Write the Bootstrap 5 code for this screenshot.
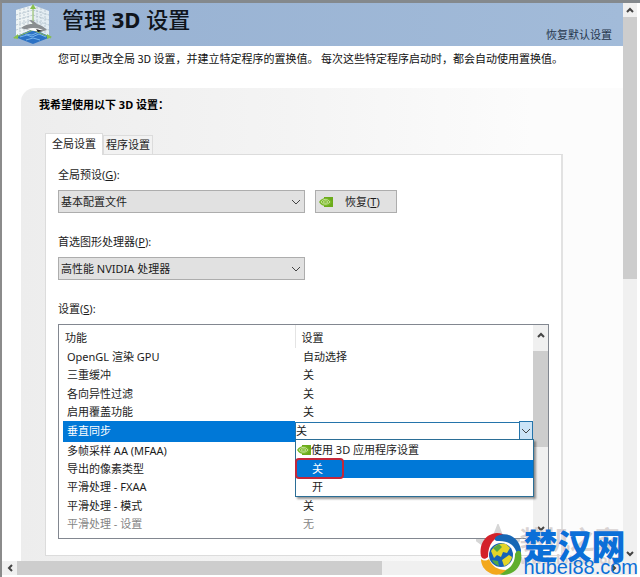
<!DOCTYPE html>
<html lang="zh-CN">
<head>
<meta charset="utf-8">
<meta name="viewport" content="width=device-width, initial-scale=1">
<title>管理 3D 设置</title>
<link href="https://cdn.jsdelivr.net/npm/bootstrap@5.3.0/dist/css/bootstrap.min.css" rel="stylesheet">
<style>
body { font-family: "Noto Sans", "Noto Sans CJK SC", sans-serif; font-size: 11px; line-height: 16px; color: #1c1c1c; background: #fff; }
.window { border-top: 3px solid #84898d; border-left: 2px solid #8b8b8b; padding-right: 3px; padding-bottom: 2px; }
.titlebar { background: linear-gradient(90deg, #97b1d2, #a2bbd9); height: 43px; padding: 0 11px 0 10px; }
.titlebar h1 { font-size: 22px; line-height: 32px; font-weight: 500; color: #10151c; margin: 0 0 0 8px; }
.titlebar a { color: #26364c; margin-bottom: 3px; }
.intro { font-family: "Noto Sans CJK SC", sans-serif; padding: 4px 0 22px 56px; color: #111; }
.sheet { margin-left: 19px; padding: 9px 60px 5px 24px; border-radius: 14px 0 0 0; background: linear-gradient(90deg, #ededed, #f4f4f4 45%, #fcfcfc 85%); }
.sheet h2 { font-size: 11px; line-height: 16px; font-weight: 700; margin: 0 0 20px -6px; color: #000; }
.tabs button { border: 1px solid #dcdcdc; border-bottom: 0; background: #f2f2f2; padding: 0 2px; height: 19px; color: #1c1c1c; }
.tabs button.active { background: #fff; height: 22px; padding: 0 6px 2px; margin-bottom: -1px; position: relative; }
.pane { background: #fff; border: 1px solid #dcdcdc; border-right: 2px solid #e2e2e2; padding: 12px 12px 16px 12px; }
.field-label { display: block; margin-bottom: 7px; }
.field { margin-bottom: 21px; }
.combo { width: 247px; height: 23px; border: 1px solid #adadad; border-radius: 0; background-color: #e1e1e1; padding: 0 22px 0 2px; font-size: 11px; line-height: 16px; color: #1c1c1c; background-position: right 3px center; background-size: 10px 8px; }
.chev { background-image: url("data:image/svg+xml,%3Csvg xmlns='http://www.w3.org/2000/svg' viewBox='0 0 10 8'%3E%3Cpath d='M1 2l4 4 4-4' fill='none' stroke='%23444'/%3E%3C/svg%3E"); background-repeat: no-repeat; appearance: none; }
.restore { width: 82px; height: 23px; border: 1px solid #adadad; background: #e1e1e1; padding: 0 3px; margin-left: 10px; color: #1c1c1c; }
.listbox { border: 1px solid #828790; height: 215px; padding-left: 4px; }
.listbox table { height: 208px; table-layout: fixed; border-collapse: collapse; }
.listbox th { font-weight: 400; height: 23px; padding: 2px 0 0 2px; }
.listbox th + th { border-left: 1px solid #e4e4e4; padding-left: 6px; }
.listbox th:first-child { width: 232px; }
.listbox td { padding: 0 0 0 4px; line-height: 16px; }
.listbox td + td { padding-left: 8px; }
.listbox tr.picked td { background: #0078d7; color: #fff; }
.listbox tr.picked td + td { padding: 0; position: relative; background: #fff; }
.cellcombo { width: 100%; height: 18px; border: 1px solid #2474ab; border-radius: 0; padding: 0; font-size: 11px; line-height: 16px; display: block; color: #1c1c1c; background: #fff; }
.cellcombo-arrow { right: 0; top: 0; bottom: 0; width: 14px; background-color: #cce4f7; border: 1px solid #2474ab; pointer-events: none; background-position: center; background-size: 10px 8px; }
.drop { left: 0; right: -1px; top: 18px; border: 1px solid #2b6e96; background: #fff; box-shadow: 2px 2px 2px #0006; z-index: 3; color: #1c1c1c; }
.drop li { height: 18px; line-height: 18px; padding-left: 16px; }
.drop li:first-child { height: 20px; padding-left: 1px; }
.drop li.on { background: #0078d7; color: #fff; }
.drop li.ring { left: -1px; top: 18px; width: 49px; height: 21px; border: 2px solid #c4273a; border-radius: 4px; }
.muted td { color: #858585; }
.bar-track { background: #f0f0f0; }
.bar-track button { border: 0; padding: 0; background: #f0f0f0; display: flex; align-items: center; justify-content: center; flex: none; }
.bar-track svg { fill: none; stroke: #444; stroke-width: 2; }
.inner-bar { width: 15px; }
.inner-bar button { height: 18px; }
.inner-bar button:first-child { height: 20px; margin-bottom: 6px; }
.inner-thumb { height: 45%; background: #cdcdcd; }
.v-bar { width: 14px; }
.v-bar button { height: 14px; }
.v-thumb { background: #cdcdcd; height: 47%; }
.h-bar { height: 14px; }
.h-bar button { width: 15px; height: 14px; }
.h-thumb { background: #cdcdcd; height: 14px; width: 59%; }
.stamp { right: 2px; bottom: 1px; z-index: 5; color: #0b6fd8; pointer-events: none; }
.stamp-name { font-family: "Noto Sans CJK SC", sans-serif; font-weight: 900; font-size: 34px; line-height: 28px; }
.stamp-site { font-family: "Liberation Sans", sans-serif; font-size: 20px; line-height: 17px; }
.ghost { right: 20px; bottom: 9px; z-index: 4; color: #d9d3d3; pointer-events: none; }
.ghost-name { font-size: 25px; line-height: 26px; font-weight: 700; }
.ghost-site { font-size: 13px; line-height: 14px; font-weight: 700; }
</style>
</head>
<body>
<svg width="0" height="0" class="position-absolute" aria-hidden="true">
  <symbol id="eye" viewBox="0 0 14 10">
    <path d="M5 0h9v10H5z" fill="#6cab1c"/>
    <path d="M0 5C2 2 4 1 7 1c3 0 4 2 6 4-2 3-4 4-6 4-3 0-5-1-7-4z" fill="#79b928"/>
    <path d="M2 5c2-3 6-4 9 0-3 3-6 3-9 0zM4 5c1-1 3-2 5 0-2 2-4 1-5 0z" fill="none" stroke="#d5eaae" stroke-width=".8"/>
  </symbol>
</svg>
<div class="window d-flex flex-column min-vh-100 position-relative">
  <div class="d-flex flex-grow-1">
    <main class="flex-grow-1">
      <header class="titlebar d-flex align-items-start">
        <svg width="42" height="42" viewBox="0 0 42 42" aria-hidden="true">
          <path d="M4 7l17-5v24L4 34z" fill="#eef4f5"/><path d="M21 2l16 6v26L21 26z" fill="#e4edf2"/>
          <path d="M4 12l17-5 16 5M4 17l17-5 16 5M4 22l17-5 16 5M4 27l17-5 16 5M8 6v26M12 5v25M16 4v24M25 4v24M29 5v25M33 7v25" stroke="#aebfca" stroke-width=".8" fill="none" stroke-dasharray="2 1"/>
          <path d="M3 34l18-8 18 8-18 7z" fill="#2c72c5"/>
          <path d="M8 34l7-2 5 2 7-3 7 3M14 37l7-2 7 2M13 31l7 1 7-3" fill="none" stroke="#78b5ec"/>
          <path d="M21 27V3M21 27L2 35M21 27l18 8" stroke="#88b857" fill="none"/>
          <path d="M21 1l-3 5h6zM1 35l5-4v5zM40 34l-5-3v5z" fill="#87c04d"/>
          <path d="M9 25c5-4 9-4 12-4l-4-4c4 0 6 2 8 4 4 1 7 3 10 6-6 2-10 2-15 0l-8-1z" fill="#8a8e91"/>
          <path d="M15 26c5-2 12-1 16 1-5 2-11 1-16-1z" fill="#fff"/><path d="M24 26l7 2-5 1z" fill="#202020"/>
        </svg>
        <h1>管理 <b>3D</b> 设置</h1>
        <a href="#" class="ms-auto align-self-end text-decoration-none">恢复默认设置</a>
      </header>
      <p class="intro m-0 text-nowrap">您可以更改全局 3D 设置，并建立特定程序的置换值。 每次这些特定程序启动时，都会自动使用置换值。</p>
      <section class="sheet">
        <h2>我希望使用以下 3D 设置：</h2>
        <div class="tabs d-flex align-items-end" role="tablist">
          <button type="button" role="tab" class="active" aria-selected="true">全局设置</button>
          <button type="button" role="tab" aria-selected="false">程序设置</button>
        </div>
        <div class="pane" role="tabpanel">
          <label for="preset" class="field-label">全局预设(<u>G</u>):</label>
          <div class="d-flex field">
            <select id="preset" class="combo chev"><option>基本配置文件</option></select>
            <button type="button" class="restore d-flex align-items-center"><svg width="14" height="10" aria-hidden="true"><use href="#eye"/></svg><span class="ps-2 ms-1">恢复(<u>T</u>)</span></button>
          </div>
          <label for="gpu" class="field-label">首选图形处理器(<u>P</u>):</label>
          <select id="gpu" class="combo chev d-block field"><option>高性能 NVIDIA 处理器</option></select>
          <div id="settings-label" class="field-label">设置(<u>S</u>):</div>
          <div class="listbox d-flex">
            <div class="flex-grow-1">
              <table class="w-100" aria-labelledby="settings-label">
                <thead><tr><th scope="col">功能</th><th scope="col">设置</th></tr></thead>
                <tbody>
                  <tr><td>OpenGL 渲染 GPU</td><td>自动选择</td></tr>
                  <tr><td>三重缓冲</td><td>关</td></tr>
                  <tr><td>各向异性过滤</td><td>关</td></tr>
                  <tr><td>启用覆盖功能</td><td>关</td></tr>
                  <tr class="picked"><td>垂直同步</td><td>
                    <select class="cellcombo chev" aria-label="垂直同步"><option>关</option></select>
                    <span class="cellcombo-arrow chev position-absolute"></span>
                    <ul class="drop list-unstyled position-absolute m-0">
                      <li class="d-flex align-items-center"><svg width="14" height="10" aria-hidden="true"><use href="#eye"/></svg>使用 3D 应用程序设置</li>
                      <li class="on">关</li>
                      <li>开</li>
                      <li class="ring position-absolute p-0" aria-hidden="true"></li>
                    </ul>
                  </td></tr>
                  <tr><td>多帧采样 AA (MFAA)</td><td></td></tr>
                  <tr><td>导出的像素类型</td><td></td></tr>
                  <tr><td>平滑处理 - FXAA</td><td></td></tr>
                  <tr><td>平滑处理 - 模式</td><td>关</td></tr>
                  <tr class="muted"><td>平滑处理 - 设置</td><td>无</td></tr>
                </tbody>
              </table>
            </div>
            <div class="bar-track inner-bar d-flex flex-column flex-shrink-0">
              <button type="button" aria-label="向上"><svg width="8" height="6"><path d="M1 5l3-3 3 3"/></svg></button>
              <div class="inner-thumb"></div>
              <button type="button" class="mt-auto" aria-label="向下"><svg width="8" height="6"><path d="M1 1l3 3 3-3"/></svg></button>
            </div>
          </div>
        </div>
      </section>
    </main>
    <div class="bar-track v-bar d-flex flex-column flex-shrink-0">
      <button type="button" aria-label="向上滚动"><svg width="8" height="6"><path d="M1 5l3-3 3 3"/></svg></button>
      <div class="v-thumb"></div>
      <button type="button" class="mt-auto" aria-label="向下滚动"><svg width="8" height="6"><path d="M1 1l3 3 3-3"/></svg></button>
    </div>
  </div>
  <div class="bar-track h-bar d-flex pe-3">
    <button type="button" aria-label="向左滚动"><svg width="6" height="8"><path d="M5 1L2 4l3 3"/></svg></button>
    <div class="h-thumb"></div>
    <button type="button" class="ms-auto" aria-label="向右滚动"><svg width="6" height="8"><path d="M1 1l3 3-3 3"/></svg></button>
  </div>
  <div class="ghost position-absolute d-flex align-items-center">
    <svg width="44" height="44" viewBox="0 0 44 44" aria-hidden="true"><path d="M22 4l5 13h14L30 25l4 14-12-8-12 8 4-14L3 17h14z" fill="none" stroke="#d6d6d6" stroke-width="4"/></svg>
    <div><div class="ghost-name">装机之家</div><div class="ghost-site">www.lotpc.com</div></div>
  </div>
  <div class="stamp position-absolute d-flex align-items-center">
    <svg width="44" height="44" viewBox="0 0 44 44" aria-hidden="true">
      <circle cx="22" cy="22" r="17" fill="#fff"/>
      <path d="M2 24C0 12 6 2 18 1c4 0 6 1 8 3C15 4 9 12 9 25c-3 3-6 2-7-1z" fill="#d3222a"/>
      <path d="M18 4c11-5 22 2 24 14 0 4-1 7-3 9C38 15 31 8 18 9c-3-1-3-3 0-5z" fill="#1767b5"/>
      <path d="M42 21c2 11-5 21-17 22-4 0-6-1-8-3 11 0 19-6 19-18 2-4 5-4 6-1z" fill="#5fae2e"/>
      <path d="M2 27c3 2 5 2 8 0 3 7 8 11 17 11-4 5-11 6-16 3-6-3-9-8-9-14z" fill="#f3a81c"/>
      <circle cx="22" cy="23" r="12" fill="#1561b7"/>
      <path d="M12 19c3-6 10-9 15-7l4 4-3 5-4-1-2 5-4-2-3 3zM23 28l7-5 3 2c-1 5-4 8-8 9z" fill="#e3d529"/>
      <path d="M14 16l6-4 3 3-5 5zM13 28l6 1 1 5c-3-1-6-3-7-6z" fill="#55a843"/>
    </svg>
    <div><div class="stamp-name">楚汉网</div><div class="stamp-site">hubei88.com</div></div>
  </div>
</div>
<script src="https://cdn.jsdelivr.net/npm/bootstrap@5.3.0/dist/js/bootstrap.bundle.min.js"></script>
</body>
</html>
